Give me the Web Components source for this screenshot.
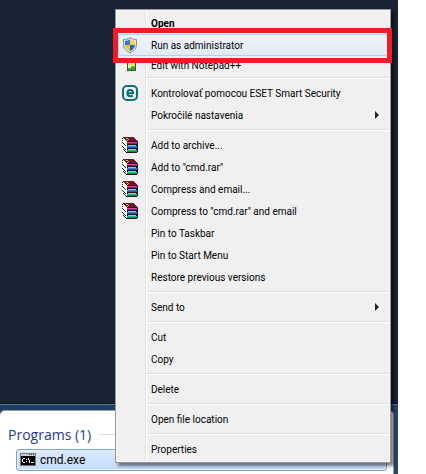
<!DOCTYPE html>
<html lang="sk">
<head>
<meta charset="utf-8">
<title>cmd.exe</title>
<style>
  html, body { height: 100%; }
  body {
    margin: 0;
    background: #fff;
    font-family: Roboto, "Open Sans", sans-serif;
    font-size: 10px;
    color: #000;
    overflow: hidden;
  }
</style>
</head>
<body>
<win-desktop>
  <start-results heading="Programs (1)">
    <result-item>
      <app-icon slot="icon" name="cmd"></app-icon>
      cmd.exe
    </result-item>
  </start-results>

  <context-menu slot="popup">
    <menu-item default>Open</menu-item>
    <menu-item active marked><app-icon slot="icon" name="shield"></app-icon>Run as administrator</menu-item>
    <menu-item compact><app-icon slot="icon" name="notepad"></app-icon>Edit with Notepad++</menu-item>
    <menu-divider></menu-divider>
    <menu-item><app-icon slot="icon" name="eset"></app-icon>Kontrolovať pomocou ESET Smart Security</menu-item>
    <menu-item submenu>Pokročilé nastavenia</menu-item>
    <menu-divider></menu-divider>
    <menu-item><app-icon slot="icon" name="rar"></app-icon>Add to archive...</menu-item>
    <menu-item><app-icon slot="icon" name="rar"></app-icon>Add to "cmd.rar"</menu-item>
    <menu-item><app-icon slot="icon" name="rar"></app-icon>Compress and email...</menu-item>
    <menu-item><app-icon slot="icon" name="rar"></app-icon>Compress to "cmd.rar" and email</menu-item>
    <menu-item>Pin to Taskbar</menu-item>
    <menu-item>Pin to Start Menu</menu-item>
    <menu-item>Restore previous versions</menu-item>
    <menu-divider></menu-divider>
    <menu-item submenu>Send to</menu-item>
    <menu-divider></menu-divider>
    <menu-item>Cut</menu-item>
    <menu-item>Copy</menu-item>
    <menu-divider></menu-divider>
    <menu-item>Delete</menu-item>
    <menu-divider></menu-divider>
    <menu-item>Open file location</menu-item>
    <menu-divider></menu-divider>
    <menu-item>Properties</menu-item>
  </context-menu>
</win-desktop>

<script>
const ICONS = {
  shield: `
    <path d="M8 .5C6.300 1.900 4 2.500 1.500 2.500v5.200c0 3.600 2.600 6.500 6.500 7.900 3.900-1.400 6.500-4.300 6.500-7.900V2.500C12 2.500 9.700 1.900 8 .5z" fill="#dfe3e6" stroke="#848b92"/>
    <path d="M8 2.200C6.500 3.200 4.900 3.700 3 3.800V8h5z" fill="#2d7ad6"/>
    <path d="M8 2.200c1.500 1 3.100 1.500 5 1.600V8H8z" fill="#fbd433"/>
    <path d="M3 8h5v6c-2.900-1.200-4.900-3.300-5-6z" fill="#f5c320"/>
    <path d="M13 8H8v6c2.900-1.200 4.900-3.300 5-6z" fill="#1e68c4"/>`,
  notepad: `
    <path d="M5 2h9v12H5z" fill="#4a4f40"/>
    <path d="M6 2h7v8H6z" fill="#d8e878"/>
    <path d="M6 9h7v2H6z" fill="#88c838"/>
    <path d="M6 10h7v3H6z" fill="#35a52c"/>
    <path d="M6 8h3v3H6z" fill="#fff6a0"/>`,
  eset: `
    <rect x="1" y="1" width="14" height="14" rx="4" fill="#eef6f6" stroke="#0b7078" stroke-width="2"/>
    <path d="M5.500 8.200H11C11 6 9.900 4.900 8.200 4.900S5.400 6.200 5.400 8.200s1.200 3.100 3 3.100c.9 0 1.700-.2 2.300-.6" fill="none" stroke="#0b6870" stroke-width="2"/>`,
  rar: `
    <g shape-rendering="crispEdges">
      <path d="M0 1h2v1h1v1h1v1h1v12H4v-1H3v-1H2v-1H1v-1H0z" fill="#fff"/>
      <path d="M0 1h1v1H0zM0 3h1v1H0zM0 5h1v1H0zM1 6h1v1H1zM2 7h1v1H2zM3 8h1v1H3zM0 9h1v1H0zM1 10h1v1H1zM2 11h1v1H2zM3 12h1v1H3zM1 12h1v1H1zM2 13h1v1H2zM3 14h1v1H3z" fill="#222"/>
      <path d="M1 0h11v1h1v1h1v1h1v1h1v1H5V4H4V3H3V2H2V1H1z" fill="#781030"/>
      <path d="M5 4h10v1h1v10h-1v1H4v-1h1z" fill="#181820"/>
      <path d="M4 1h2v1H4zM6 2h1v1H6zM5 3h1v1H5z" fill="#d8c018"/>
      <path d="M5 5h10v1H5z" fill="#d84898"/><path d="M5 6h10v1H5z" fill="#b00868"/>
      <path d="M6 8h8v1H6z" fill="#a8b8d0"/>
      <path d="M5 9h10v1H5z" fill="#2888d8"/><path d="M5 10h10v1H5z" fill="#0660b0"/>
      <path d="M6 12h8v1H6z" fill="#a8c8c0"/>
      <path d="M5 13h10v1H5z" fill="#28b878"/><path d="M5 14h10v1H5z" fill="#089058"/>
    </g>`,
  cmd: `
    <g shape-rendering="crispEdges">
      <path d="M0 1h16v13H0z" fill="#777"/>
      <path d="M1 2h14v2H1z" fill="#c9cdd2"/>
      <path d="M9 2h1v1H9zM11 2h1v1h-1zM13 2h1v1h-1z" fill="#444"/>
      <path d="M1 4h14v9H1z" fill="#000"/>
      <path d="M3 6h2v1H3zM2 7h1v3H2zM3 10h2v1H3zM6 7h1v1H6zM6 9h1v1H6zM8 6h1v2H8zM9 8h1v3H9zM11 10h3v1h-3z" fill="#fff"/>
    </g>`,
}

/** <app-icon name="..."> 16px icon */
class AppIcon extends HTMLElement {
  connectedCallback() {
    if (this.shadowRoot) return
    this.attachShadow({ mode: 'open' }).innerHTML = `
      <style>
        :host { display: block; width: 16px; height: 16px; }
        svg { display: block; width: 100%; height: 100%; }
      </style>
      <svg viewBox="0 0 16 16" aria-hidden="true">${ICONS[this.getAttribute('name')] || ''}</svg>
    `
  }
}

/** <win-desktop> wallpaper, taskbar search results in the default slot, popups over them */
class WinDesktop extends HTMLElement {
  constructor() {
    super()
    this.attachShadow({ mode: 'open' }).innerHTML = `
      <style>
        :host {
          display: flex;
          flex-direction: column;
          justify-content: flex-end;
          position: relative;
          height: 100%;
          margin-right: 28px;
          background: #182434;
        }
        .popup { position: absolute; top: 9px; left: 115px; right: 7px; }
      </style>
      <slot></slot>
      <div class="popup"><slot name="popup"></slot></div>
    `
  }
}

/** <start-results heading="..."> search pane of the start menu */
class StartResults extends HTMLElement {
  connectedCallback() {
    if (this.shadowRoot) return
    this.attachShadow({ mode: 'open' }).innerHTML = `
      <style>
        :host {
          display: block;
          padding: 5px 4px 0 0;
          border-top: 1px solid #5d7790;
          background: linear-gradient(90deg, #1f3d62, #28466c);
          box-shadow: 0 -1px #0a121c;
          font-family: "Open Sans", "Noto Sans", sans-serif;
        }
        section {
          padding: 9px 6px 3px 8px;
          border: 1px solid #8d9cab;
          border-width: 1px 1px 0 0;
          border-radius: 5px 5px 0 0;
          background: #fff;
        }
        header { display: flex; align-items: center; gap: 8px; height: 29px; }
        h2 { margin: 0; font-size: 14px; font-weight: 400; line-height: 28px; color: #1e3a9a; }
        hr { flex: 1; margin: 0; border: 0; border-top: 1px solid #dfdfdf; }
        .list { padding-left: 8px; }
      </style>
      <section>
        <header><h2>${this.getAttribute('heading')}</h2><hr></header>
        <div class="list"><slot></slot></div>
      </section>
    `
  }
}

class ResultItem extends HTMLElement {
  constructor() {
    super()
    this.attachShadow({ mode: 'open' }).innerHTML = `
      <style>
        :host { display: block; }
        button {
          display: flex;
          align-items: center;
          gap: 4px;
          box-sizing: border-box;
          width: 100%;
          height: 22px;
          padding: 0 3px;
          border: 1px solid #7da2ce;
          border-radius: 3px;
          background: linear-gradient(#dcebfc, #c1dbfc);
          box-shadow: inset 0 0 0 1px #e8f2fd;
          font: 12px Roboto, "Open Sans", sans-serif;
          color: #000;
          text-align: left;
        }
      </style>
      <button type="button"><slot name="icon"></slot><span><slot></slot></span></button>
    `
  }
}

class ContextMenu extends HTMLElement {
  constructor() {
    super()
    this.attachShadow({ mode: 'open' }).innerHTML = `
      <style>
        :host {
          display: block;
          padding: 2px;
          border: 1px solid #979797;
          background:
            linear-gradient(90deg, #e2e3e3 1px, #fff 1px) 29px 2px / 2px calc(100% - 4px) no-repeat,
            #f0f0f0;
          box-shadow: inset 0 0 0 1px #f6f6f6, 3px 3px 3px rgba(0, 0, 0, .5);
        }
      </style>
      <div role="menu"><slot></slot></div>
    `
  }
}

/**
 * <menu-item>
 *   default  bold entry
 *   active   hover highlight
 *   marked   red frame around the row
 *   submenu  arrow on the right
 *   compact  shorter row
 */
class MenuItem extends HTMLElement {
  connectedCallback() {
    if (this.shadowRoot) return
    this.attachShadow({ mode: 'open' }).innerHTML = `
      <style>
        :host { display: block; position: relative; }
        :host([marked]) { z-index: 1; }
        button {
          display: grid;
          grid-template-columns: 16px 1fr auto;
          column-gap: 13px;
          align-items: center;
          box-sizing: border-box;
          width: 100%;
          height: 22px;
          padding: 0 8px 0 3px;
          border: 1px solid transparent;
          border-radius: 3px;
          background: none;
          font: inherit;
          color: inherit;
          text-align: left;
          white-space: nowrap;
        }
        :host([default]) button { font-weight: 700; }
        :host([compact]) button { height: 18px; }
        :host([active]) button {
          border-color: #aecff7;
          background: linear-gradient(rgba(241, 245, 250, .9), rgba(224, 233, 247, .9));
        }
        .label { padding-top: 2px; line-height: 14px; }
        .arrow { width: 4px; height: 8px; fill: #222; }
        .mark {
          position: absolute;
          inset: -6px -4px -7px -5px;
          border: 5px solid #ee1c24;
          pointer-events: none;
        }
      </style>
      <button type="button" role="menuitem">
        <span><slot name="icon"></slot></span>
        <span class="label"><slot></slot></span>
        ${this.hasAttribute('submenu') ? '<svg class="arrow" viewBox="0 0 4 8"><path d="M0 0l4 4-4 4z"/></svg>' : ''}
      </button>
      ${this.hasAttribute('marked') ? '<div class="mark"></div>' : ''}
    `
  }
}

class MenuDivider extends HTMLElement {
  constructor() {
    super()
    this.attachShadow({ mode: 'open' }).innerHTML = `
      <style>
        :host { display: block; padding: 3px 0 3px 29px; }
        hr { margin: 0; border: 0; border-top: 1px solid #e0e0e0; border-bottom: 1px solid #fff; }
      </style>
      <hr>
    `
  }
}

customElements.define('app-icon', AppIcon)
customElements.define('win-desktop', WinDesktop)
customElements.define('start-results', StartResults)
customElements.define('result-item', ResultItem)
customElements.define('context-menu', ContextMenu)
customElements.define('menu-item', MenuItem)
customElements.define('menu-divider', MenuDivider)
</script>
</body>
</html>
